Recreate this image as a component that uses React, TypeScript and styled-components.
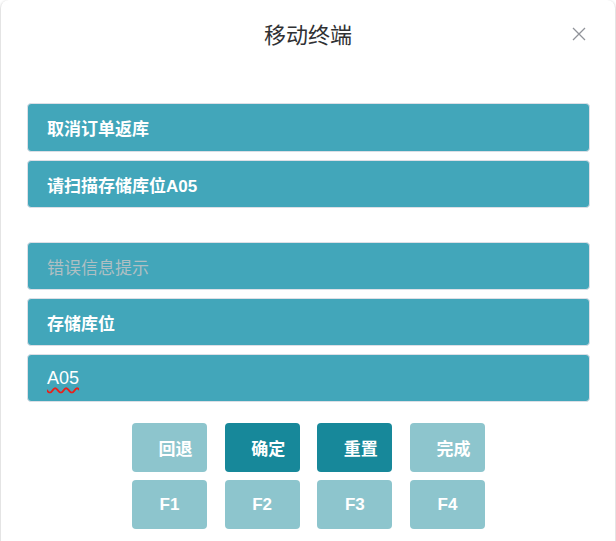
import styled, { createGlobalStyle } from "styled-components";

const GlobalStyle = createGlobalStyle`
    html, body {
        margin: 0;
        padding: 0;
        background: #ffffff;
    }

    body {
        font-family: "Liberation Sans", "Noto Sans CJK SC", sans-serif;
    }
`;

const Dialog = styled.div`
    width: 614px;
    min-height: 560px;
    margin-left: 1px;

    background: #ffffff;
    border-radius: 8px;
    box-shadow: 0 1px 3px rgba(0, 0, 0, 0.3);

    box-sizing: border-box;
`;

const Header = styled.div`
    height: 76px;
    padding: 0 20px;

    display: flex;
    align-items: center;
    justify-content: center;

    position: relative;
`;

const Title = styled.h2`
    margin: 0;
    margin-top: -4px;

    font-size: 22px;
    font-weight: 400;
    line-height: 24px;

    color: #303133;
`;

const CloseButton = styled.button`
    position: absolute;
    top: 25px;
    right: 27px;

    width: 18px;
    height: 18px;
    padding: 0;

    border: none;
    background: transparent;

    display: flex;
    align-items: center;
    justify-content: center;

    color: #909399;
`;

const Body = styled.div`
    padding: 27px 25px 0 26px;

    display: flex;
    flex-direction: column;
    gap: 8px;
`;

const Field = styled.div<{ $gapBefore?: boolean }>`
    height: 49px;
    padding: 0 19px;
    margin-top: ${(props) => (props.$gapBefore ? "26px" : "0")};

    display: flex;
    align-items: center;

    background: #42a6ba;
    border: 1px solid #dcdfe6;
    border-radius: 4px;

    box-sizing: border-box;

    font-size: 17px;
    font-weight: 700;
    color: #ffffff;

    & + & {
        height: 48px;
    }
`;

const Placeholder = styled.span`
    font-weight: 400;
    color: #afbfc3;
`;

const Misspelt = styled.span`
    font-size: 18px;
    font-weight: 400;

    text-decoration: underline wavy #e8201a;
    text-decoration-thickness: 1.5px;
    text-underline-offset: 3px;
`;

const Keypad = styled.div`
    margin-top: 13px;

    display: grid;
    grid-template-columns: repeat(4, 75px);
    column-gap: 17.7px;
    row-gap: 8px;
    justify-content: center;
`;

const Key = styled.button<{ $active?: boolean; $indent?: boolean }>`
    height: 49px;
    padding: 0 0 0 ${(props) => (props.$indent ? "12px" : "0")};

    border: none;
    border-radius: 4px;

    background: ${(props) => (props.$active ? "#17889a" : "#8dc5cd")};

    font-family: "Liberation Sans", "Noto Sans CJK SC", sans-serif;
    font-size: 17px;
    font-weight: 700;
    color: #ffffff;
`;

const actions = [
    { label: "回退", active: false },
    { label: "确定", active: true },
    { label: "重置", active: true },
    { label: "完成", active: false },
];

const fnKeys = ["F1", "F2", "F3", "F4"];

export default function App() {
    return (
        <>
            <GlobalStyle />
            <Dialog>
                <Header>
                    <Title>移动终端</Title>
                    <CloseButton aria-label="关闭">
                        <svg width="14" height="14" viewBox="0 0 14 14">
                            <path d="M1 1 L13 13 M13 1 L1 13" stroke="currentColor" strokeWidth="1.3" fill="none" />
                        </svg>
                    </CloseButton>
                </Header>
                <Body>
                    <Field>取消订单返库</Field>
                    <Field>请扫描存储库位A05</Field>
                    <Field $gapBefore>
                        <Placeholder>错误信息提示</Placeholder>
                    </Field>
                    <Field>存储库位</Field>
                    <Field>
                        <Misspelt>A05</Misspelt>
                    </Field>
                    <Keypad>
                        {actions.map((a) => (
                            <Key key={a.label} $active={a.active} $indent>
                                {a.label}
                            </Key>
                        ))}
                        {fnKeys.map((k) => (
                            <Key key={k}>{k}</Key>
                        ))}
                    </Keypad>
                </Body>
            </Dialog>
        </>
    );
}
